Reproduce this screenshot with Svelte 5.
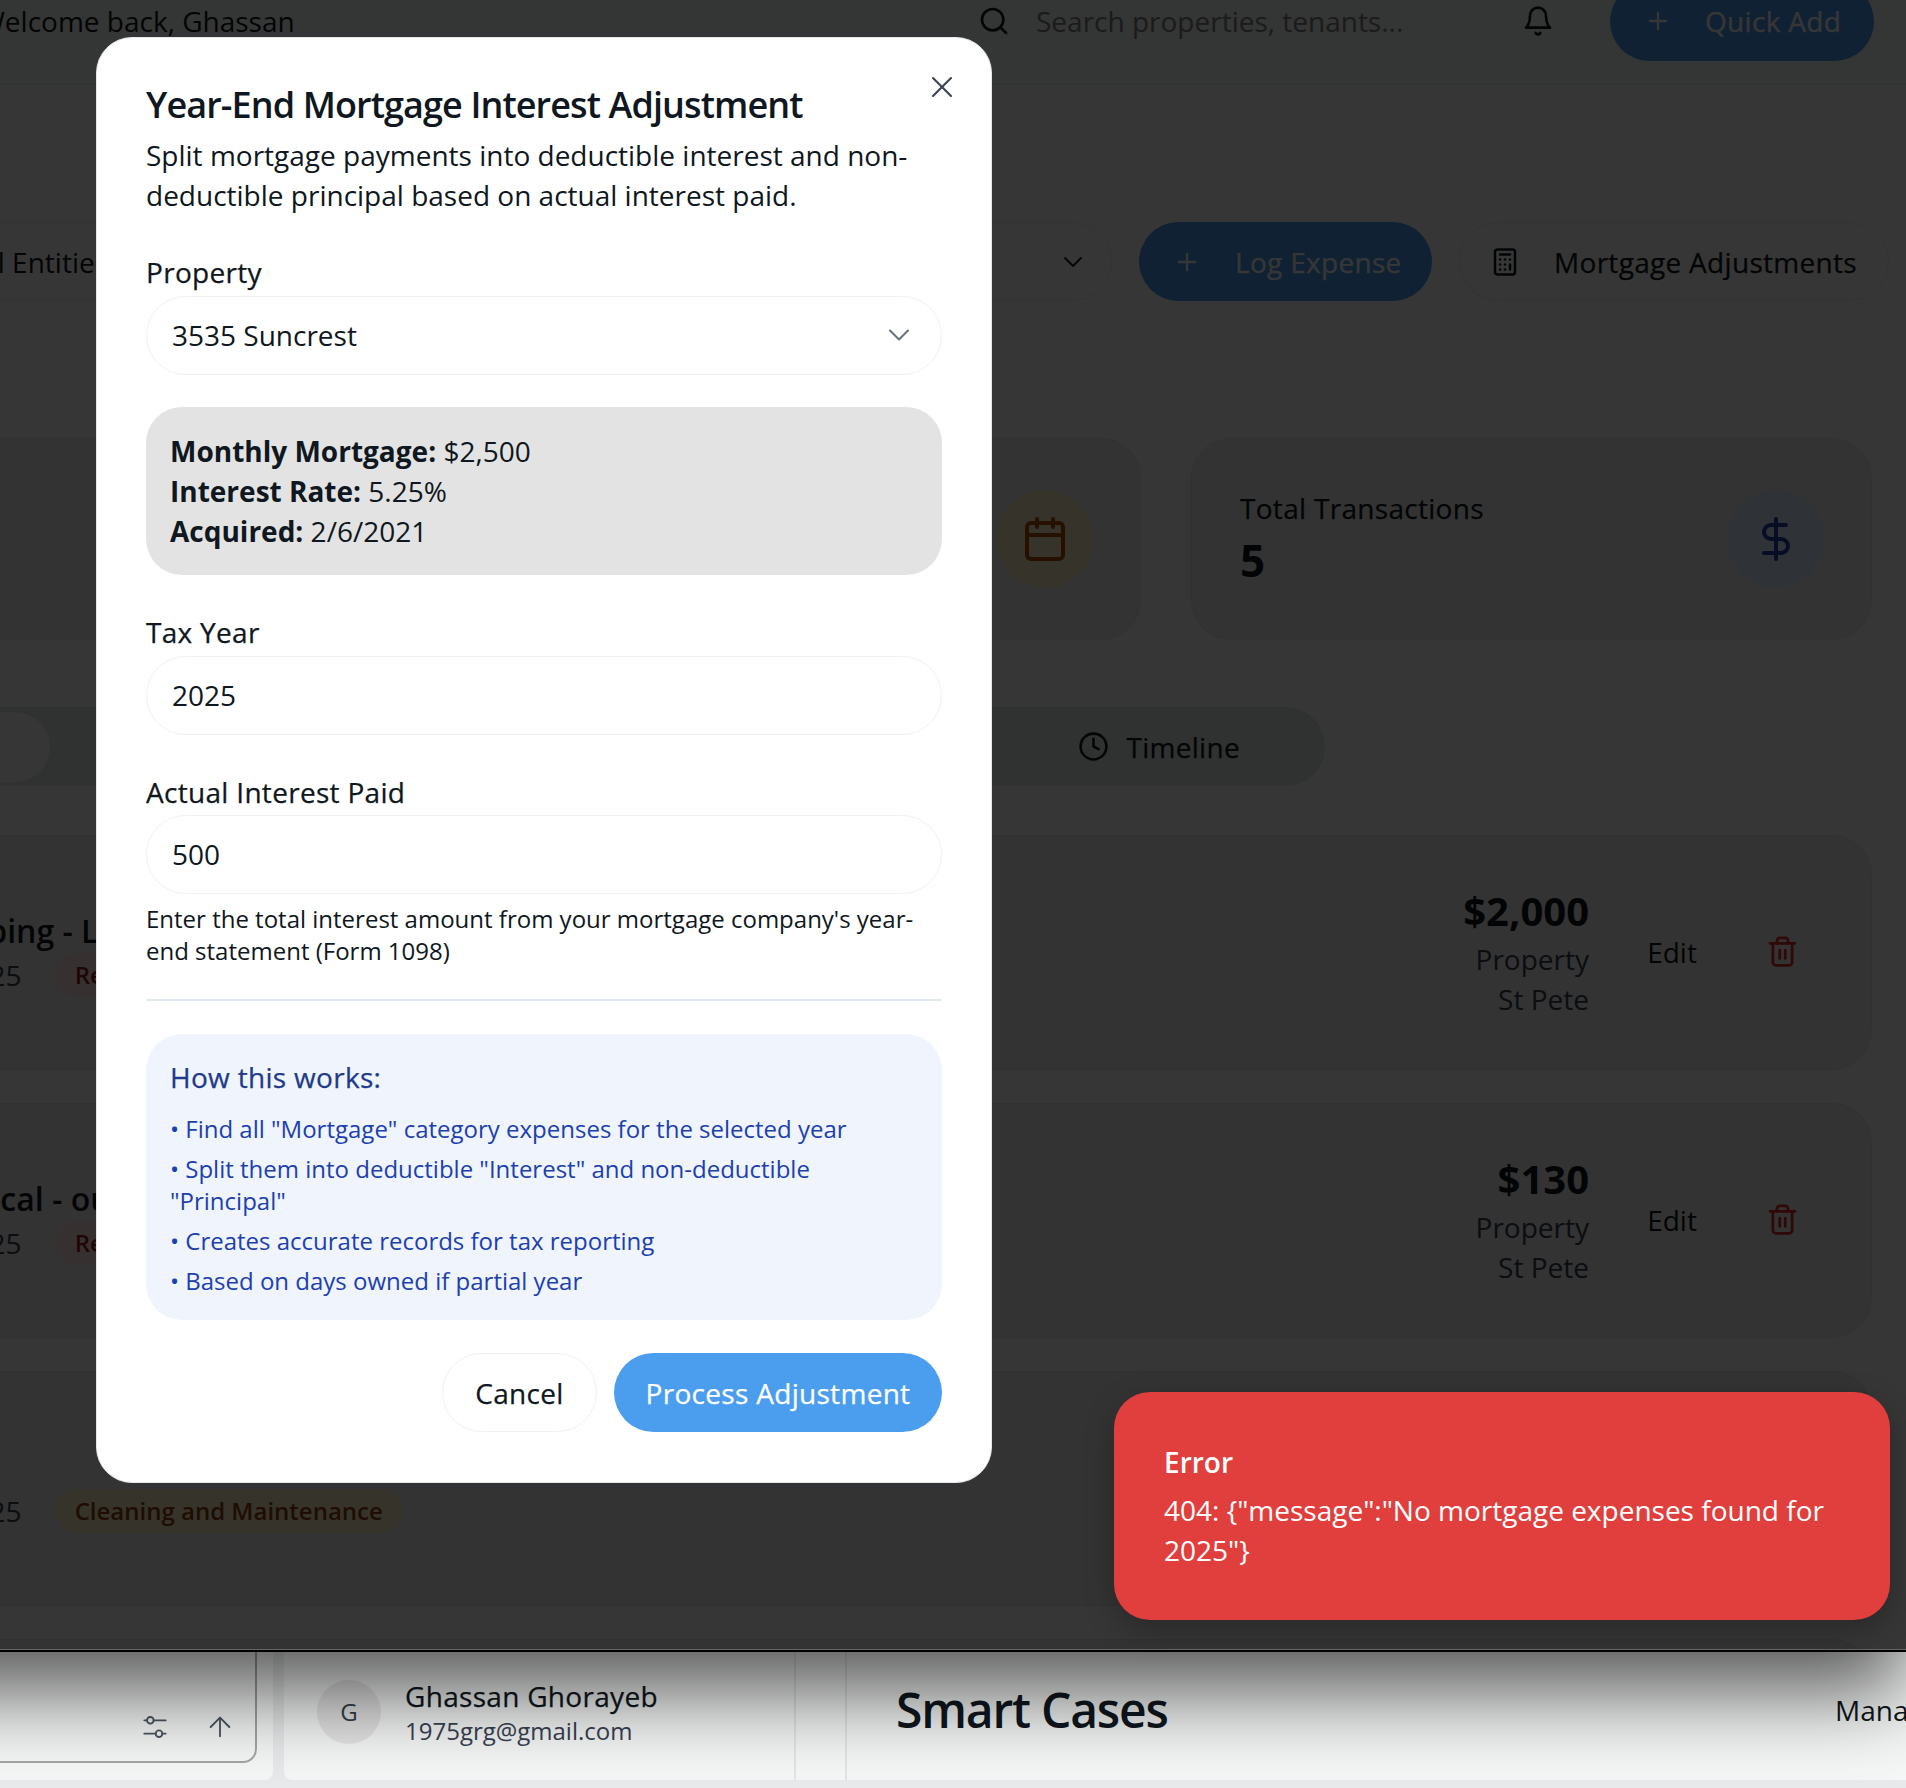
<script>
  // Mortgage adjustment dialog over the expenses page, with the error toast on top.
  const rows = [
    { title: "Landscaping - Lawn", date: "10/01/2025", tag: "Repairs", amount: "$2,000" },
    { title: "Tax Medical - outlet", date: "09/14/2025", tag: "Repairs", amount: "$130" },
    { title: "Cleaner", date: "08/02/2025", tag: "Cleaning and Maintenance", amount: "$250", tone: "amber" },
    { title: "Mortgage", date: "07/01/2025", tag: "Mortgage", amount: "$2,500" }
  ];
  const steps = [
    'Find all "Mortgage" category expenses for the selected year',
    'Split them into deductible "Interest" and non-deductible "Principal"',
    "Creates accurate records for tax reporting",
    "Based on days owned if partial year"
  ];
</script>

<div class="root">
  <div class="viewport">
    <div class="page">
      <header class="topbar">
        <span class="welcome">Welcome back, Ghassan</span>
        <div class="search">
          <svg class="ic" width="32" height="32" viewBox="0 0 24 24"><circle cx="11" cy="11" r="8" /><path d="m21 21-4.3-4.3" /></svg>
          <span>Search properties, tenants...</span>
        </div>
        <svg class="ic bell" width="32" height="32" viewBox="0 0 24 24"><path d="M6 8a6 6 0 0 1 12 0c0 7 3 9 3 9H3s3-2 3-9" /><path d="M10.3 21a1.94 1.94 0 0 0 3.4 0" /></svg>
        <button class="primary quick medium">
          <svg class="ic" width="28" height="28" viewBox="0 0 24 24"><path d="M5 12h14" /><path d="M12 5v14" /></svg>
          Quick Add
        </button>
      </header>

      <div class="toolbar">
        <div class="entity">
          <span>All Entities</span>
          <svg class="ic thin" width="32" height="32" viewBox="0 0 24 24"><path d="m6 9 6 6 6-6" /></svg>
        </div>
        <button class="primary log medium">
          <svg class="ic" width="28" height="28" viewBox="0 0 24 24"><path d="M5 12h14" /><path d="M12 5v14" /></svg>
          Log Expense
        </button>
        <button class="ghost mortgage medium">
          <svg class="ic" width="30" height="30" viewBox="0 0 24 24"><rect width="16" height="20" x="4" y="2" rx="2" /><path d="M8 6h8" /><path d="M16 14v4" /><path d="M16 10h.01" /><path d="M12 10h.01" /><path d="M8 10h.01" /><path d="M12 14h.01" /><path d="M8 14h.01" /><path d="M12 18h.01" /><path d="M8 18h.01" /></svg>
          Mortgage Adjustments
        </button>
      </div>

      <div class="stats">
        <div class="stat grow">
          <div>
            <div class="stat-label medium">This Month</div>
            <div class="stat-value">$0</div>
          </div>
          <span class="stat-icon amber">
            <svg class="ic" width="48" height="48" viewBox="0 0 24 24"><path d="M8 2v4" /><path d="M16 2v4" /><rect width="18" height="18" x="3" y="4" rx="2" /><path d="M3 10h18" /></svg>
          </span>
        </div>
        <div class="stat total">
          <div>
            <div class="stat-label medium">Total Transactions</div>
            <div class="stat-value">5</div>
          </div>
          <span class="stat-icon blue">
            <svg class="ic" width="48" height="48" viewBox="0 0 24 24"><path d="M12 2v20" /><path d="M17 5H9.5a3.5 3.5 0 0 0 0 7h5a3.5 3.5 0 0 1 0 7H6" /></svg>
          </span>
        </div>
      </div>

      <div class="tabs">
        <span class="tab-active">Expenses</span>
        <span class="tab medium">
          <svg class="ic" width="31" height="31" viewBox="0 0 24 24"><circle cx="12" cy="12" r="10" /><path d="M12 6v6l4 2" /></svg>
          Timeline
        </span>
      </div>

      <div class="rows">
        {#each rows as r}
          <div class="row">
            <div class="row-main">
              <div class="row-title">{r.title}</div>
              <div class="row-meta">
                <span>{r.date}</span>
                <span class="tag" class:amber={r.tone === "amber"}>{r.tag}</span>
              </div>
            </div>
            <div class="row-side">
              <div class="amount">{r.amount}</div>
              <div>Property</div>
              <div>St Pete</div>
            </div>
            <button class="edit">Edit</button>
            <button class="trash">
              <svg class="ic" width="33" height="33" viewBox="0 0 24 24"><path d="M3 6h18" /><path d="M19 6v14c0 1-1 2-2 2H7c-1 0-2-1-2-2V6" /><path d="M8 6V4c0-1 1-2 2-2h4c1 0 2 1 2 2v2" /><path d="M10 11v6" /><path d="M14 11v6" /></svg>
            </button>
          </div>
        {/each}
      </div>
    </div>

    <div class="backdrop"></div>

    <div class="modal">
      <svg class="ic thin close" width="36" height="36" viewBox="0 0 24 24"><path d="M18 6 6 18" /><path d="m6 6 12 12" /></svg>
      <h2>Year-End Mortgage Interest Adjustment</h2>
      <p class="desc">Split mortgage payments into deductible interest and non-deductible principal based on actual interest paid.</p>

      <div class="label medium">Property</div>
      <div class="field select">
        <span>3535 Suncrest</span>
        <svg class="ic thin" width="36" height="36" viewBox="0 0 24 24"><path d="m6 9 6 6 6-6" /></svg>
      </div>

      <div class="info">
        <div><strong>Monthly Mortgage:</strong> $2,500</div>
        <div><strong>Interest Rate:</strong> 5.25%</div>
        <div><strong>Acquired:</strong> 2/6/2021</div>
      </div>

      <div class="label medium">Tax Year</div>
      <div class="field">2025</div>

      <div class="label medium">Actual Interest Paid</div>
      <div class="field paid">500</div>
      <p class="help">Enter the total interest amount from your mortgage company's year-end statement (Form 1098)</p>

      <hr />

      <div class="how">
        <div class="how-title medium">How this works:</div>
        <ul>
          {#each steps as s}
            <li>• {s}</li>
          {/each}
        </ul>
      </div>

      <div class="actions">
        <button class="cancel medium">Cancel</button>
        <button class="process medium">Process Adjustment</button>
      </div>
    </div>

    <div class="toast">
      <div class="toast-title">Error</div>
      <div>404: {'{'}"message":"No mortgage expenses found for 2025"{'}'}</div>
    </div>
  </div>

  <div class="strip">
    <div class="composer-wrap">
      <div class="composer">
        <svg class="ic thin" width="32" height="32" viewBox="0 0 24 24"><path d="M4 7h2" /><circle cx="8.5" cy="7" r="2.5" /><path d="M11 7h9" /><path d="M4 17h8.5" /><circle cx="15" cy="17" r="2.5" /><path d="M17.5 17H20" /></svg>
        <svg class="ic thin" width="32" height="32" viewBox="0 0 24 24"><path d="m5 12 7-7 7 7" /><path d="M12 19V5" /></svg>
      </div>
    </div>
    <div class="account">
      <span class="avatar">G</span>
      <div>
        <div class="acc-name medium">Ghassan Ghorayeb</div>
        <div class="acc-mail">1975grg@gmail.com</div>
      </div>
    </div>
    <div class="divider-gap"></div>
    <div class="brand">
      <span class="brand-name">Smart Cases</span>
      <span class="brand-nav">Manage</span>
    </div>
  </div>
  <div class="strip-foot"></div>
</div>

<style>
  :global(body) {
    margin: 0;
    background: #e9eaeb;
  }
  .root {
    position: relative;
    width: 1906px;
    height: 1788px;
    overflow: hidden;
    font-family: "Open Sans", "Noto Sans", sans-serif;
    font-size: 28px;
    line-height: 40px;
    color: #0f1720;
  }
  button {
    font: inherit;
    color: inherit;
    border: 0;
    background: none;
    padding: 0;
    display: flex;
    align-items: center;
  }
  /* no 500 cut of Open Sans here, so this stands in for it */
  .medium {
    letter-spacing: 0.3px;
    -webkit-text-stroke: 0.25px currentColor;
  }
  .ic {
    fill: none;
    stroke: currentColor;
    stroke-width: 2;
    stroke-linecap: round;
    stroke-linejoin: round;
    flex: none;
  }
  .ic.thin {
    stroke-width: 1.4;
  }

  /* dimmed page */
  .viewport {
    position: relative;
    z-index: 2;
    height: 1650px;
    margin-left: -100px;
    padding-left: 100px;
    background: #fff;
    border-bottom: 2px solid #000;
    box-shadow: 0 40px 80px rgba(0, 0, 0, 0.65);
  }
  .page {
    height: 1650px;
    overflow: hidden;
    margin-left: -100px;
    padding-left: 100px;
  }
  .topbar {
    display: flex;
    align-items: center;
    height: 103px;
    margin-top: -18px;
    padding: 0 32px 24px 0;
    border-bottom: 1px solid #e2e8f0;
    box-sizing: border-box;
    width: 1906px;
    background: #f6f8f7;
  }
  .welcome {
    margin-left: -21px;
    width: 999px;
    flex: none;
    white-space: nowrap;
  }
  .search {
    display: flex;
    align-items: center;
    gap: 26px;
    color: #808080;
    width: 544px;
    flex: none;
  }
  .search .ic {
    color: #0f1720;
  }
  .bell {
    margin-right: 56px;
  }
  .primary {
    background: #4a9eed;
    color: #fff;
    height: 79px;
    border-radius: 40px;
    flex: none;
  }
  .quick {
    width: 264px;
    padding-left: 34px;
    gap: 33px;
    box-sizing: border-box;
  }
  .toolbar {
    display: flex;
    justify-content: flex-end;
    align-items: center;
    gap: 27px;
    margin-top: 137px;
    width: 1889px;
  }
  .entity {
    display: flex;
    justify-content: space-between;
    align-items: center;
    width: 1280px;
    height: 79px;
    flex: none;
    box-sizing: border-box;
    padding: 0 22px 0 0;
    border: 1px solid #e7ebec;
    border-radius: 40px;
    text-align: right;
  }
  .entity span {
    margin-left: 140px;
  }
  .log {
    width: 293px;
    padding-left: 34px;
    gap: 34px;
    box-sizing: border-box;
  }
  .ghost {
    height: 79px;
    flex: none;
    border: 1px solid #e7ebec;
    border-radius: 40px;
    box-sizing: border-box;
  }
  .mortgage {
    width: 430px;
    padding-left: 30px;
    gap: 34px;
  }
  .stats {
    display: flex;
    gap: 50px;
    margin-top: 137px;
    margin-left: -200px;
    width: 2072px;
  }
  .stat {
    display: flex;
    justify-content: space-between;
    align-items: center;
    height: 202px;
    box-sizing: border-box;
    padding: 0 46px 0 48px;
    background: #eef2f0;
    border: 1px solid #e2e6e4;
    border-radius: 40px;
  }
  .grow {
    flex: 1;
  }
  .total {
    width: 681px;
    flex: none;
  }
  .stat-label {
    line-height: 40px;
  }
  .stat-value {
    font-size: 44px;
    line-height: 60px;
    font-weight: 700;
    margin-top: 2px;
  }
  .stat-icon {
    width: 98px;
    height: 98px;
    flex: none;
    border-radius: 50%;
    display: flex;
    align-items: center;
    justify-content: center;
  }
  .stat-icon.amber {
    background: #fef3c7;
    color: #b45309;
  }
  .stat-icon.blue {
    background: #dbeafe;
    color: #1d40af;
  }
  .tabs {
    display: flex;
    align-items: center;
    justify-content: space-between;
    margin-top: 67px;
    margin-left: -200px;
    width: 1525px;
    height: 79px;
    box-sizing: border-box;
    padding-right: 85px;
    border-radius: 40px;
    background: #e3e5e5;
  }
  .tab-active {
    width: 243px;
    height: 70px;
    margin-left: 7px;
    padding-left: 40px;
    box-sizing: border-box;
    background: #fff;
    border-radius: 35px;
    line-height: 70px;
    color: #fff;
  }
  .tab {
    display: flex;
    align-items: center;
    gap: 17px;
  }
  .rows {
    display: flex;
    flex-direction: column;
    gap: 33px;
    margin-top: 49px;
    margin-left: -190px;
    width: 2062px;
  }
  .row {
    display: flex;
    align-items: center;
    height: 235px;
    flex: none;
    box-sizing: border-box;
    padding: 0 50px 0 50px;
    background: #eef2f0;
    border: 1px solid #e2e6e4;
    border-radius: 40px;
  }
  .row-main {
    flex: 1;
  }
  .row-title {
    font-size: 32px;
    line-height: 44px;
    font-weight: 600;
  }
  .row-meta {
    display: flex;
    align-items: center;
    gap: 33px;
    margin-left: 12px;
    color: #374151;
  }
  .tag {
    display: inline-block;
    padding: 0 20px;
    height: 44px;
    line-height: 44px;
    font-size: 24px;
    font-weight: 600;
    border-radius: 22px;
    background: #fee2e2;
    color: #991b1b;
  }
  .tag.amber {
    background: #fef3c7;
    color: #92400e;
  }
  .row-side {
    text-align: right;
    color: #374151;
  }
  .amount {
    font-size: 40px;
    line-height: 52px;
    margin-top: -2px;
    margin-bottom: 2px;
    font-weight: 700;
    color: #0f1720;
  }
  .edit {
    margin: 0 0 2px 32px;
    width: 102px;
    height: 79px;
    justify-content: center;
    border: 1px solid #e9edeb;
    border-radius: 40px;
  }
  .trash {
    margin: 0 -1px 2px 19px;
    width: 80px;
    height: 79px;
    justify-content: center;
    color: #dc2626;
    border: 1px solid #e9edeb;
    border-radius: 40px;
  }

  .backdrop {
    position: absolute;
    inset: 0;
    background: rgba(0, 0, 0, 0.79);
    box-shadow: inset 0 -1px 0 #666;
  }

  /* dialog */
  .modal {
    position: absolute;
    top: 37px;
    left: 196px;
    width: 896px;
    height: 1446px;
    box-sizing: border-box;
    padding: 45px 49px 0;
    background: #fff;
    border: 1px solid #e2e8f0;
    border-radius: 36px;
  }
  .close {
    position: absolute;
    top: 31px;
    right: 31px;
    color: #3c4450;
  }
  h2 {
    margin: 0;
    font-size: 36px;
    line-height: 44px;
    font-weight: 600;
    letter-spacing: -0.9px;
  }
  .desc {
    margin: 8px 0 0;
  }
  .label {
    margin-top: 37px;
  }
  .field {
    display: flex;
    align-items: center;
    justify-content: space-between;
    height: 79px;
    margin-top: 4px;
    padding: 0 24px 1px 25px;
    box-sizing: border-box;
    border: 1px solid #f0f2f2;
    border-radius: 40px;
  }
  .field.paid {
    margin-top: 3px;
  }
  .select .ic {
    color: #6b7280;
  }
  .info {
    margin-top: 32px;
    height: 168px;
    padding: 24px 24px;
    box-sizing: border-box;
    background: #e3e3e3;
    border-radius: 36px;
  }
  strong {
    font-weight: 700;
  }
  .help {
    margin: 9px 0 0;
    font-size: 24px;
    line-height: 32px;
  }
  hr {
    margin: 32px 0 0;
    border: 0;
    height: 2px;
    background: #e2e8f0;
  }
  .how {
    margin-top: 33px;
    height: 286px;
    padding: 23px 24px 0;
    box-sizing: border-box;
    background: #eff4fd;
    border-radius: 36px;
  }
  .how-title {
    color: #1e3a8a;
  }
  ul {
    list-style: none;
    margin: 16px 0 0;
    padding: 0;
    display: flex;
    flex-direction: column;
    gap: 8px;
    font-size: 24px;
    line-height: 32px;
    color: #1d40af;
  }
  .actions {
    display: flex;
    justify-content: flex-end;
    gap: 17px;
    margin-top: 33px;
  }
  .cancel {
    width: 155px;
    height: 79px;
    justify-content: center;
    border: 1px solid #f0f2f2;
    border-radius: 40px;
    box-sizing: border-box;
  }
  .process {
    width: 328px;
    height: 79px;
    justify-content: center;
    border-radius: 40px;
    background: #4a9eed;
    color: #fff;
  }

  /* toast */
  .toast {
    position: absolute;
    top: 1392px;
    left: 1214px;
    width: 776px;
    height: 228px;
    box-sizing: border-box;
    padding: 50px 50px 0;
    background: #e13f3d;
    border-radius: 36px;
    color: #fff;
    box-shadow: 0 10px 30px rgba(0, 0, 0, 0.25);
  }
  .toast-title {
    font-weight: 600;
    margin-bottom: 8px;
  }

  /* next capture, under the dimmed page */
  .strip {
    display: flex;
    height: 128px;
    background: #e9eaeb;
  }
  .composer-wrap {
    width: 273px;
    flex: none;
    margin-right: 11px;
    background: #f6f7f7;
    border-radius: 0 0 8px 0;
  }
  .composer {
    width: 257px;
    height: 111px;
    box-sizing: border-box;
    border: solid #a3a5a6;
    border-width: 0 2px 2px 0;
    border-radius: 0 0 14px 0;
    display: flex;
    justify-content: flex-end;
    align-items: flex-end;
    gap: 33px;
    padding: 0 19px 18px 0;
    color: #4b5563;
  }
  .account {
    display: flex;
    align-items: center;
    gap: 24px;
    width: 512px;
    flex: none;
    box-sizing: border-box;
    padding: 0 0 8px 33px;
    border-right: 2px solid #e2e6ea;
    background: #f6f7f7;
    border-radius: 0 0 0 8px;
  }
  .avatar {
    width: 64px;
    height: 64px;
    border-radius: 50%;
    background: #e5e5e5;
    display: flex;
    align-items: center;
    justify-content: center;
    font-size: 24px;
    font-weight: 500;
    color: #374151;
  }
  .acc-name {
    line-height: 38px;
  }
  .acc-mail {
    font-size: 24px;
    line-height: 32px;
    color: #374151;
  }
  .divider-gap {
    width: 49px;
    flex: none;
    border-right: 2px solid #e2e6ea;
    background: #f6f7f7;
  }
  .brand {
    flex: 1;
    display: flex;
    align-items: center;
    white-space: nowrap;
    padding: 0 0 12px 49px;
    overflow: hidden;
    background: #f6f7f7;
  }
  .brand-name {
    font-size: 48px;
    font-weight: 600;
    line-height: 60px;
    letter-spacing: -1.2px;
    width: 939px;
    flex: none;
  }
  .strip-foot {
    height: 8px;
    background: #e9eaeb;
  }
</style>
